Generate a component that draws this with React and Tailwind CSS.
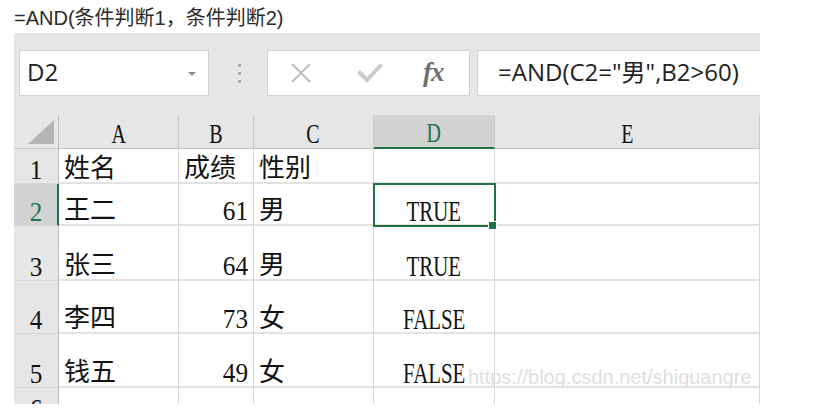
import React from "react";

const SERIF = { fontFamily: '"Liberation Serif", "Noto Sans CJK SC", serif' };

const COLW = ["w-[45px]", "w-[120px]", "w-[75px]", "w-[120px]", "w-[121px]", "w-[265px]"];

const ROWS = [
  { n: "1", h: "h-[35px]", a: "姓名", b: "成绩", bl: true, c: "性别", d: "" },
  { n: "2", h: "h-[42px]", a: "王二", b: "61", c: "男", d: "TRUE", sel: true },
  { n: "3", h: "h-[55px]", a: "张三", b: "64", c: "男", d: "TRUE" },
  { n: "4", h: "h-[53px]", a: "李四", b: "73", c: "女", d: "FALSE" },
  { n: "5", h: "h-[54px]", a: "钱五", b: "49", c: "女", d: "FALSE" },
  { n: "6", h: "h-[35px]", a: "", b: "", c: "", d: "" },
];

const cellBase =
  "flex items-end shrink-0 bg-white border-r border-b-2 border-r-[#d6d6d6] border-b-[#e2e2e2] overflow-hidden text-[26px] leading-[26px] text-[#111]";

function Txt({ children, cls = "" }) {
  return <span className={"block whitespace-nowrap " + cls}>{children}</span>;
}

export default function App() {
  return (
    <div className="relative w-[815px] h-[410px] bg-white overflow-hidden">
      <div
        className="h-[33px] pl-[14px] pt-[3px] text-[20px] leading-[30px] text-[#2b2b2b]"
        style={{ fontFamily: '"Liberation Sans", "Noto Sans CJK SC", sans-serif' }}
      >
        =AND(条件判断1，条件判断2)
      </div>

      <div className="ml-[14px] w-[746px] h-[371px] bg-[#e6e6e6] flex flex-col overflow-hidden">
        {/* formula bar */}
        <div className="mt-[17px] h-[46px] flex shrink-0">
          <div className="ml-[5px] w-[190px] h-full bg-white border border-[#d2d2d2] flex items-center pl-[7px] pr-[12px]">
            <span
              className="text-[24px] leading-[30px] text-[#222] mt-[-2px]"
              style={{ fontFamily: '"Open Sans", sans-serif' }}
            >
              D2
            </span>
            <span className="ml-auto mt-[2px] w-0 h-0 border-l-[4px] border-r-[4px] border-t-[4px] border-l-transparent border-r-transparent border-t-[#8c8c8c]" />
          </div>
          <div className="w-[58px] flex flex-col items-center justify-center gap-[5px] pl-[2px]">
            <span className="w-[3px] h-[3px] bg-[#a9a9a9]" />
            <span className="w-[3px] h-[3px] bg-[#a9a9a9]" />
            <span className="w-[3px] h-[3px] bg-[#a9a9a9]" />
          </div>
          <div className="w-[203px] h-full bg-white border border-[#d2d2d2] flex items-center">
            <svg className="ml-[22px]" width="22" height="20" viewBox="0 0 22 20">
              <path d="M2 1 L20 19 M20 1 L2 19" stroke="#bdbdbd" strokeWidth="2" fill="none" />
            </svg>
            <svg className="ml-[45px]" width="26" height="20" viewBox="0 0 26 20">
              <path d="M1.5 8.5 L10 17 L24.5 1.5" stroke="#cbcbcb" strokeWidth="4" fill="none" />
            </svg>
            <span
              className="ml-[40px] text-[27px] leading-[27px] italic font-semibold text-[#707070] tracking-[-1px] mt-[-2px]"
              style={{ fontFamily: '"Liberation Serif", serif' }}
            >
              fx
            </span>
          </div>
          <div className="ml-[7px] flex-1 h-full bg-white border-y border-l border-[#d2d2d2] flex items-center pl-[20px]">
            <span
              className="text-[24px] leading-[30px] text-[#222] mt-[-2px] whitespace-nowrap"
              style={{ fontFamily: '"Open Sans", "Noto Sans CJK SC", sans-serif' }}
            >
              =AND(C2="男",B2&gt;60)
            </span>
          </div>
        </div>

        {/* grid */}
        <div className="relative mt-[19px] flex flex-col shrink-0" style={SERIF}>
          {/* header */}
          <div className="flex h-[34px] shrink-0">
            <div className={COLW[0] + " h-full flex items-end justify-end pr-[4px] pb-[4px] border-r border-b border-r-[#bdbdbd] border-b-[#c4c4c4]"}>
              <svg width="26" height="24" viewBox="0 0 26 24">
                <polygon points="26,0 26,24 0,24" fill="#b5b5b5" />
              </svg>
            </div>
            {["A", "B", "C", "D", "E"].map((l, i) => {
              const sel = l === "D";
              return (
                <div
                  key={l}
                  className={
                    COLW[i + 1] +
                    " h-full flex items-end justify-center pb-[1px] border-r border-r-[#c8c8c8] text-[27px] leading-[26px] " +
                    (sel
                      ? "bg-[#d2d2d2] border-b-2 border-b-[#217346] text-[#217346]"
                      : "border-b border-b-[#c4c4c4] text-[#111]")
                  }
                >
                  <Txt cls="scale-x-[0.74]">{l}</Txt>
                </div>
              );
            })}
          </div>

          {ROWS.map((r) => (
            <div key={r.n} className={"flex shrink-0 " + r.h}>
              <div
                className={
                  COLW[0] +
                  " h-full flex items-end justify-center border-b border-b-[#d6d6d6] text-[28px] leading-[26px] " +
                  (r.sel
                    ? "bg-[#d2d2d2] border-r-2 border-r-[#217346] text-[#217346]"
                    : "bg-[#e6e6e6] border-r border-r-[#bdbdbd] text-[#111]")
                }
              >
                <Txt cls="scale-x-[0.9]">{r.n}</Txt>
              </div>
              <div className={cellBase + " " + COLW[1] + " h-full pl-[5px]"}>
                <Txt>{r.a}</Txt>
              </div>
              <div className={cellBase + " " + COLW[2] + " h-full " + (r.bl ? "pl-[5px]" : "justify-end pr-[5px]")}>
                {r.bl ? (
                  <Txt>{r.b}</Txt>
                ) : (
                  <Txt cls="text-[28px] scale-x-[0.9] origin-right">{r.b}</Txt>
                )}
              </div>
              <div className={cellBase + " " + COLW[3] + " h-full pl-[5px]"}>
                <Txt>{r.c}</Txt>
              </div>
              <div className={cellBase + " " + COLW[4] + " h-full justify-center"}>
                <Txt cls="text-[29px] scale-x-[0.72]">{r.d}</Txt>
              </div>
              <div className={cellBase + " " + COLW[5] + " h-full"} />
            </div>
          ))}

          {/* selection */}
          <div className="absolute left-[359px] top-[68px] w-[123px] h-[44px] border-2 border-[#217346] pointer-events-none" />
          <div className="absolute left-[474px] top-[106px] w-[9px] h-[9px] bg-[#217346] border border-white" />
        </div>
      </div>

      <div
        className="absolute left-[468px] top-[365px] text-[20px] leading-[24px] text-[#dedede] whitespace-nowrap"
        style={{ fontFamily: '"Liberation Sans", sans-serif', textShadow: "0 0 1px rgba(255,255,255,0.9)" }}
      >
        https://blog.csdn.net/shiguangre
      </div>
    </div>
  );
}
